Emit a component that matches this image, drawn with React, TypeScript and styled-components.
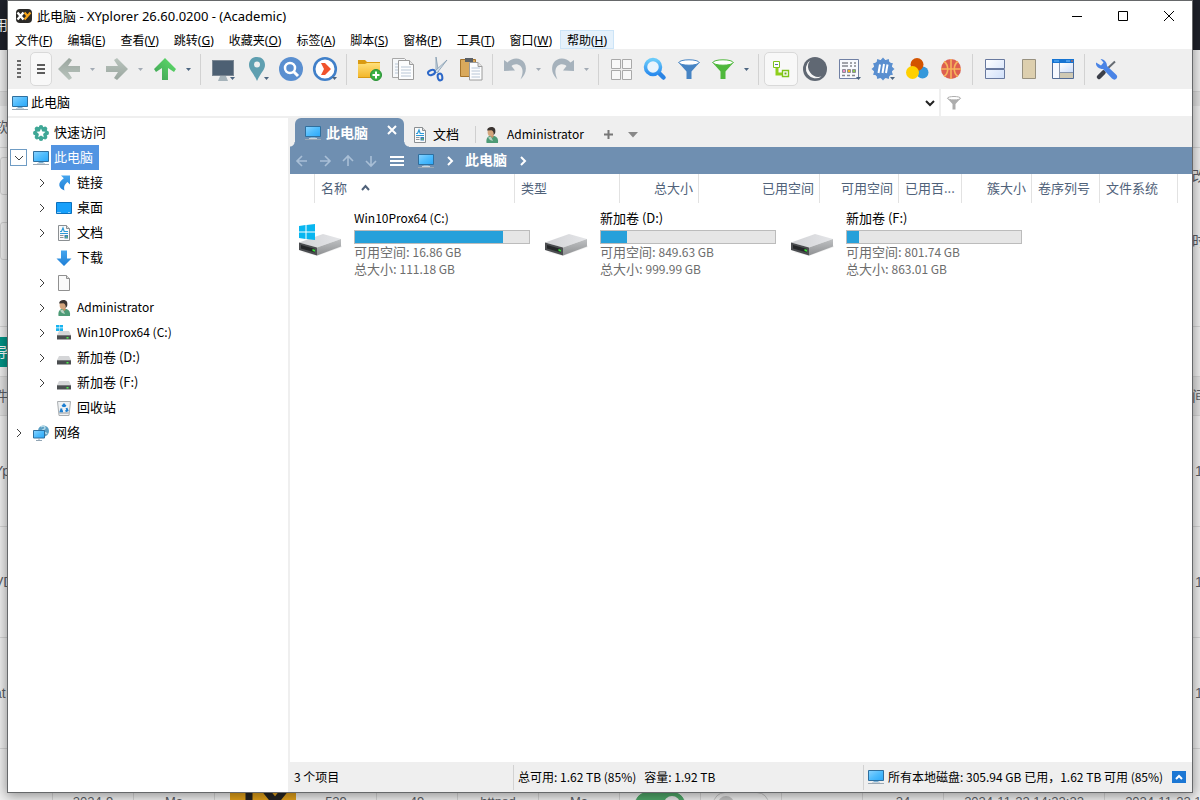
import React from "react";
import styled, { createGlobalStyle } from "styled-components";

const UI = `"Noto Sans CJK SC", "Noto Sans", sans-serif`;
const SEGOE = `"Noto Sans", "Noto Sans CJK SC", sans-serif`;

const GlobalStyle = createGlobalStyle`
  *, *::before, *::after { box-sizing: border-box; }
  body { margin: 0; font-family: ${UI}; font-size: 13px; color: #000; }
  button, input { font: inherit; color: inherit; margin: 0; padding: 0; border: 0; background: none; outline: 0; }
  ul { list-style: none; margin: 0; padding: 0; }
  svg { display: block; flex: none; overflow: visible; }
`;

/* ---------- page behind the window ---------- */

const Desktop = styled.div`
  position: relative;
  height: 100vh;
  min-height: 500px;
  overflow: hidden;
  background: #f1f1f1;
`;
const BackPage = styled.div`
  display: flex;
  flex-direction: column;
  font-family: "Liberation Sans", "Noto Sans CJK SC", sans-serif;
  font-size: 14px;
  color: #5c5f66;
`;
const BackRow = styled.div<{ $h: number; $bg?: string; $line?: boolean; $light?: boolean }>`
  display: flex;
  flex: none;
  justify-content: space-between;
  align-items: center;
  height: ${(p) => p.$h}px;
  line-height: 20px;
  background: ${(p) => p.$bg || "transparent"};
  border-bottom: ${(p) => (p.$line ? "1px solid #d6d6d6" : "0")};
  color: ${(p) => (p.$light ? "#fff" : "inherit")};
`;
const LeftText = styled.span<{ $bg?: string }>`
  width: 30px;
  padding: 5px 0;
  text-indent: -6px;
  white-space: nowrap;
  background: ${(p) => p.$bg || "transparent"};
`;
const RightText = styled.span<{ $digit?: boolean }>`
  width: 8px;
  padding-left: ${(p) => (p.$digit ? 3 : 0)}px;
  white-space: nowrap;
  overflow: hidden;
`;
const FieldRows = styled.div`
  display: flex;
  flex-direction: column;
  gap: 27px;
  align-self: flex-start;
  width: 100%;
  padding-top: 9px;
`;
const FieldRow = styled.div`
  display: flex;
  justify-content: space-between;
  align-items: center;
  height: 38px;
`;
const FieldBox = styled.span`
  width: 30px;
  height: 38px;
  border: 1px solid #d2d2d2;
  border-radius: 3px;
`;
const BackCells = styled.div`
  display: grid;
  grid-template-columns: 53px repeat(11, 81px) 161px 161px;
  height: 80px;
`;
const BackCell = styled.span<{ $plain?: boolean }>`
  display: flex;
  justify-content: center;
  padding-top: 45px;
  padding-left: ${(p) => (p.$plain ? 14 : 0)}px;
  line-height: 16px;
  font-size: 13px;
  border-right: ${(p) => (p.$plain ? "0" : "1px solid #d6d6d6")};
`;
const LogoBlock = styled.span`
  width: 66px;
  height: 36px;
  margin-top: -12px;
  background: #e2a11a;
`;
const Pill = styled.span<{ $on?: boolean }>`
  display: flex;
  align-items: center;
  justify-content: ${(p) => (p.$on ? "flex-end" : "flex-start")};
  width: ${(p) => (p.$on ? 50 : 56)}px;
  height: 24px;
  margin-top: -2px;
  padding: 0 4px;
  border-radius: 12px;
  background: ${(p) => (p.$on ? "#4fa869" : "transparent")};
  border: 1px solid ${(p) => (p.$on ? "#4fa869" : "#c4c4c4")};
  &::before {
    content: "";
    width: 16px;
    height: 16px;
    border-radius: 50%;
    background: ${(p) => (p.$on ? "#e6e6e6" : "#c4c4c4")};
  }
`;

/* ---------- window frame ---------- */

const Window = styled.main`
  position: absolute;
  inset: 0 7px 7px 7px;
  display: flex;
  flex-direction: column;
  background: #fff;
  border: 1px solid #66686a;
  box-shadow: 0 2px 12px 1px rgba(0, 0, 0, 0.4);
`;
const TitleBar = styled.header`
  display: flex;
  align-items: center;
  height: 29px;
  padding-left: 8px;
  font-family: ${SEGOE};
`;
const Title = styled.h1`
  flex: 1;
  margin: 0 0 0 5px;
  font-size: 13px;
  font-weight: 400;
  line-height: 20px;
`;
const CaptionButton = styled.button`
  display: flex;
  align-items: center;
  justify-content: center;
  width: 46px;
  height: 29px;
`;
const MenuBar = styled.nav`
  display: flex;
  gap: 1px;
  height: 19px;
  font-family: ${SEGOE};
`;
const MenuItem = styled.button<{ $hot?: boolean }>`
  height: 19px;
  padding: 2px 6px 0;
  font-size: 12px;
  line-height: 15px;
  white-space: nowrap;
  border: 1px solid ${(p) => (p.$hot ? "#cce4f7" : "transparent")};
  background: ${(p) => (p.$hot ? "#e5f1fb" : "transparent")};
`;
const ToolBar = styled.div`
  display: flex;
  align-items: center;
  height: 40px;
  background: #efefef;
`;
const Tool = styled.button<{ $pressed?: boolean; $narrow?: boolean }>`
  display: flex;
  align-items: center;
  justify-content: center;
  flex: none;
  width: ${(p) => (p.$narrow ? 22 : 34)}px;
  height: 34px;
  border: 1px solid ${(p) => (p.$pressed ? "#d9d9d9" : "transparent")};
  border-radius: 5px;
  background: ${(p) => (p.$pressed ? "#f8f8f8" : "transparent")};
`;
const Grip = styled.span`
  display: flex;
  justify-content: center;
  width: 22px;
`;
const Caret = styled.button`
  display: flex;
  align-items: center;
  flex: none;
  width: 14px;
  height: 34px;
  padding-left: 4px;
`;
const Divider = styled.span`
  flex: none;
  width: 10px;
  height: 31px;
  background: linear-gradient(#d2d2d2, #d2d2d2) 4px 0 / 1px 100% no-repeat;
`;
const AddressBar = styled.div`
  display: flex;
  align-items: center;
  height: 27px;
`;
const AddressField = styled.label`
  display: flex;
  flex: 1;
  align-items: center;
  gap: 3px;
  height: 27px;
  padding-left: 4px;
  border-right: 2px solid #efefef;
`;
const FilterField = styled.label`
  display: flex;
  align-items: center;
  gap: 6px;
  flex: 0 1 251px;
  padding-left: 6px;
`;
const TextInput = styled.input`
  flex: 1;
  min-width: 0;
  height: 22px;
  padding-bottom: 2px;
  font-size: 13px;
`;
const IconButton = styled.button`
  display: flex;
  align-items: center;
  justify-content: center;
  width: 18px;
  height: 22px;
`;

/* ---------- body ---------- */

const Body = styled.div`
  display: flex;
  flex: 1;
  min-height: 0;
  background: #efefef;
`;
const Tree = styled.ul`
  flex: none;
  width: 280px;
  margin-top: 2px;
  padding-top: 2px;
  background: #fff;
  overflow: hidden;
`;
const TreeRow = styled.li<{ $level: number }>`
  display: flex;
  align-items: center;
  height: 25px;
  padding-left: ${(p) => p.$level * 23}px;
`;
const Expander = styled.button<{ $open?: boolean }>`
  display: flex;
  align-items: center;
  justify-content: center;
  width: 17px;
  height: 17px;
  margin: 0 3px 0 2px;
  border: 1px solid ${(p) => (p.$open ? "#6f9cc4" : "transparent")};
`;
const ExpanderSpace = styled.span`
  width: 22px;
`;
const TreeIcon = styled.span`
  display: flex;
  justify-content: center;
  width: 21px;
`;
const TreeLabel = styled.span<{ $selected?: boolean; $latin?: boolean }>`
  height: 25px;
  padding: 0 6px 0 3px;
  font-size: ${(p) => (p.$latin ? 12 : 13)}px;
  line-height: ${(p) => (p.$latin ? 24 : 23)}px;
  color: ${(p) => (p.$selected ? "#fff" : "#000")};
  background: ${(p) => (p.$selected ? "#5294e2" : "transparent")};
`;
const Pane = styled.section`
  display: flex;
  flex: 1;
  flex-direction: column;
  min-width: 0;
  margin-left: 2px;
`;
const Tabs = styled.div`
  display: flex;
  align-items: flex-end;
  height: 31px;
  padding-left: 5px;
`;
const ActiveTab = styled.div`
  position: relative;
  display: flex;
  align-items: center;
  gap: 5px;
  width: 109px;
  height: 29px;
  padding-left: 10px;
  color: #fff;
  font-size: 14px;
  font-weight: 700;
  background: #6f8fb1;
  border-radius: 6px 6px 0 0;
  &::before, &::after {
    content: "";
    position: absolute;
    bottom: 0;
    width: 5px;
    height: 5px;
  }
  &::before { left: -5px; background: radial-gradient(circle at 0 0, transparent 4px, #6f8fb1 5px); }
  &::after { right: -5px; background: radial-gradient(circle at 100% 0, transparent 4px, #6f8fb1 5px); }
`;
const TabButton = styled.button`
  padding-bottom: 2px;
  line-height: 20px;
`;
const CloseButton = styled.button`
  display: flex;
  align-self: flex-start;
  margin: 8px 0 0 15px;
`;
const Tab = styled.button<{ $line?: boolean }>`
  display: flex;
  align-items: center;
  gap: ${(p) => (p.$line ? 5 : 7)}px;
  height: 17px;
  margin-bottom: 4px;
  padding: 0 ${(p) => (p.$line ? 16 : 12)}px 0 8px;
  font-size: ${(p) => (p.$line ? 13 : 12)}px;
  line-height: 17px;
  border-right: 1px solid ${(p) => (p.$line ? "#cfcfcf" : "transparent")};
`;
const TabText = styled.span`
  padding-bottom: 2px;
`;
const TabTool = styled.button`
  display: flex;
  align-items: center;
  justify-content: center;
  width: 24px;
  height: 25px;
`;
const NavBar = styled.nav`
  display: flex;
  align-items: center;
  height: 27px;
  color: #fff;
  background: #6f8fb1;
`;
const NavButton = styled.button<{ $w?: number }>`
  display: flex;
  align-items: center;
  justify-content: center;
  width: ${(p) => p.$w || 23}px;
  height: 27px;
`;
const Crumb = styled.a`
  padding: 0 4px 0 5px;
  font-size: 14px;
  font-weight: 700;
  line-height: 25px;
  height: 27px;
  color: #fff;
  text-decoration: none;
`;
const Columns = styled.div`
  display: flex;
  height: 29px;
  background: #fff;
`;
const Column = styled.button<{ $w: number; $right?: boolean }>`
  display: flex;
  align-items: center;
  justify-content: ${(p) => (p.$right ? "flex-end" : "flex-start")};
  gap: 14px;
  flex: none;
  width: ${(p) => p.$w}px;
  padding: 0 5px 2px 6px;
  line-height: 20px;
  white-space: nowrap;
  color: #50627a;
  border-right: 1px solid #e2e2e2;
`;
const Drives = styled.ul`
  display: flex;
  flex: 1;
  flex-wrap: wrap;
  align-content: flex-start;
  padding-top: 5px;
  background: #fff;
`;
const Drive = styled.li`
  display: flex;
  width: 246px;
  gap: 12px;
  padding-left: 8px;
`;
const DriveIcon = styled.span`
  width: 44px;
  padding-top: 14px;
`;
const DriveText = styled.div`
  width: 176px;
  line-height: 17px;
  color: #6d6d6d;
`;
const DriveName = styled.div<{ $latin?: boolean }>`
  height: 20px;
  font-size: ${(p) => (p.$latin ? 12 : 13)}px;
  line-height: 19px;
  color: #000;
`;
const Gauge = styled.div`
  height: 14px;
  margin-top: 2px;
  border: 1px solid #bcbcbc;
  background: #e6e6e6;
`;
const GaugeFill = styled.div`
  height: 12px;
  background: #26a0da;
`;
const DriveFact = styled.div`
  height: 17px;
  line-height: 16px;
`;
const Amount = styled.span`
  font-size: 12px;
`;
const StatusBar = styled.footer`
  display: flex;
  align-items: center;
  height: 30px;
  line-height: 24px;
  font-size: 12px;
  white-space: pre;
`;
const StatusCell = styled.div<{ $w?: number }>`
  display: flex;
  align-items: center;
  flex: ${(p) => (p.$w ? `0 0 ${p.$w}px` : "1")};
  gap: 4px;
  height: 25px;
  padding-left: 4px;
  &:not(:last-child) { border-right: 1px solid #d2d2d2; }
`;
const StatusToggle = styled.button`
  display: flex;
  align-items: center;
  justify-content: center;
  width: 14px;
  height: 12px;
  margin-left: auto;
  margin-right: 6px;
  background: #1c77d4;
`;

/* ---------- icons ---------- */

const Big = ({ children }: { children: React.ReactNode }) => (
  <svg width="28" height="28" viewBox="-14 -14 28 28" aria-hidden="true">{children}</svg>
);
const Small = ({ children }: { children: React.ReactNode }) => (
  <svg width="16" height="16" viewBox="0 0 16 16" aria-hidden="true">{children}</svg>
);
const CornerCaret = () => <path d="M7 8h5l-2.500 3z" fill="#4c6580" />;

const HiddenDefs = styled.svg`
  position: absolute;
`;
const Gradients = () => (
  <HiddenDefs width="0" height="0" aria-hidden="true">
    <defs>
      <linearGradient id="screen" x1="0" y1="0" x2="1" y2="1"><stop offset="0" stopColor="#8bd3ff" /><stop offset=".5" stopColor="#4fbcfd" /><stop offset="1" stopColor="#2aa7f8" /></linearGradient>
      <linearGradient id="grey" x1="0" y1="0" x2="0" y2="1"><stop offset="0" stopColor="#9aa69f" /><stop offset="1" stopColor="#b9c4bd" /></linearGradient>
      <linearGradient id="green" x1="0" y1="0" x2="1" y2="1"><stop offset="0" stopColor="#5fe06a" /><stop offset="1" stopColor="#3f9e55" /></linearGradient>
      <linearGradient id="folder" x1="0" y1="0" x2="0" y2="1"><stop offset="0" stopColor="#ffe07a" /><stop offset="1" stopColor="#f3b72c" /></linearGradient>
      <linearGradient id="lens" x1="0" y1="0" x2="0" y2="1"><stop offset="0" stopColor="#6acbfa" /><stop offset="1" stopColor="#2b8cee" /></linearGradient>
      <linearGradient id="pane" x1="0" y1="0" x2="1" y2="1"><stop offset="0" stopColor="#fff" /><stop offset="1" stopColor="#cfdffa" /></linearGradient>
      <linearGradient id="arrow" x1="0" y1="0" x2="0" y2="1"><stop offset="0" stopColor="#45a5ee" /><stop offset="1" stopColor="#1f7fd6" /></linearGradient>
      <linearGradient id="diskTop" x1="0" y1="0" x2="1" y2="0"><stop offset="0" stopColor="#d2d3d6" /><stop offset="1" stopColor="#e4e5e8" /></linearGradient>
      <linearGradient id="diskSide" x1="0" y1="0" x2="0" y2="1"><stop offset="0" stopColor="#bfc1c3" /><stop offset="1" stopColor="#8f9193" /></linearGradient>
    </defs>
  </HiddenDefs>
);

const Computer = () => (
  <Small>
    <path d="M.5 1.500h15v10H.5z" fill="url(#screen)" stroke="#2f6f9e" />
    <path d="M5.500 12.500h5" stroke="#7fb2d4" />
    <path d="M4 13.500h8" stroke="#c9d3dc" />
    <path d="M0 14.500h16" stroke="#9aa8b4" />
  </Small>
);
const Document = () => (
  <Small>
    <path d="M2.500.5h8l3 3v12h-11z" fill="#fafafa" stroke="#8b8f92" />
    <path d="M10.500.5v3h3" fill="#ddd" stroke="#8b8f92" />
    <path d="M4 6.500h1.500L7 3l1.200 3.500H12M4 8.500h8" fill="none" stroke="#2c9ad8" strokeWidth="1.200" />
    <path d="M4 10.500h3.500M4 12.500h3.500" stroke="#8d9399" />
    <path d="M8.500 10h3.500v3.500H8.500z" fill="#3b7fb5" />
    <path d="M9 12.500l1.500-1.500 1.500 2z" fill="#6bbf6b" />
  </Small>
);
const BlankFile = () => (
  <Small>
    <path d="M2.500.5h8l3 3v12h-11z" fill="#fafafa" stroke="#909090" />
    <path d="M10.500.5v3h3" fill="#ddd" stroke="#909090" />
  </Small>
);
const User = () => (
  <Small>
    <path d="M2.500 16C2 12 3 9.500 6 9l4.500 0c3 1 4 3.500 3.500 7z" fill="#4d9b76" />
    <path d="M4 10.500L7 9.500l2 4.500-3-1z" fill="#b9d3c4" />
    <path d="M6 7.500h3.500v2.500L8 11z" fill="#c98f63" />
    <ellipse cx="6.800" cy="5" rx="3.200" ry="4.200" fill="#d3a57c" />
    <path d="M3.200 3.500C3 1.300 5 0 7.500 0 10.500 0 12 2 11.200 6L9.500 8.500C10 6 9.500 4 7.500 3.200z" fill="#3a3431" />
  </Small>
);
const SmallDisk = ({ win }: { win?: boolean }) => (
  <Small>
    <path d="M3 6h10l2 4H1z" fill="#d5d6d8" />
    <path d="M1 10h14v4.500H1z" fill="#4a4d50" />
    <path d="M1 10h14v1H1z" fill="#77797b" />
    <path d="M10.500 12h2v1.500h-2z" fill="#4cf04c" />
    {win && <path d="M0 0h3v2.500H0zM3.500 0H7v2.500H3.500zM0 3.200h3V6H0zM3.500 3.200H7V6H3.500z" fill="#18b4f0" />}
  </Small>
);
const Favorite = () => (
  <Small>
    <g fill="#3fa796">
      <circle cx="8" cy="8" r="6.500" />
      {[0, 45, 90, 135, 180, 225, 270, 315].map((a) => (
        <circle key={a} cx="8" cy="2.200" r="2.200" transform={`rotate(${a} 8 8)`} />
      ))}
    </g>
    <path d="M8 3.500l1.300 3 3.200.3-2.400 2.200.7 3.200L8 10.500l-2.800 1.700.7-3.200L3.500 6.800l3.200-.3z" fill="#fff" />
  </Small>
);
const Link = () => (
  <Small>
    <path d="M5 .5h9v9l-2.600-2.600C8.500 9.500 7.500 11.500 8.500 15.500 3 13.500.5 8.500 7.800 3.300z" fill="url(#arrow)" />
  </Small>
);
const DesktopIcon = () => (
  <Small>
    <path d="M.5 2.500h15v11H.5z" fill="#18a0fb" stroke="#0b70bd" />
    <path d="M1.500 12.500h13" stroke="#fff" strokeDasharray="1 1 1 8 1 1" />
  </Small>
);
const Download = () => (
  <Small>
    <path d="M5 .5h6v8h4.500L8 16 .5 8.500H5z" fill="url(#arrow)" />
  </Small>
);
const Recycle = () => (
  <Small>
    <path d="M1.500 1.500h13L13 15.500H3z" fill="#eef1f3" stroke="#a9adb0" />
    <path d="M3 13h10" stroke="#c2c6c9" strokeWidth="2" />
    <path d="M6.300 6.500L8 4.500l1.700 2M10.500 8l1 2.500-2 .8M7 11.300H4.700L5.600 8.500" fill="none" stroke="#1d7fd1" strokeWidth="2" />
  </Small>
);
const Network = () => (
  <Small>
    <circle cx="10.500" cy="6" r="5.500" fill="#5b9fc4" />
    <path d="M8 2c2-1.500 4-1 4 1s-3 1-3 3 4 1 5 3" fill="none" stroke="#b6dbe9" strokeWidth="1.500" />
    <path d="M.5 5.500h11v7.500H.5z" fill="url(#screen)" stroke="#2f6f9e" />
    <path d="M3 15.500h6M6 13v2" stroke="#93a6b5" />
  </Small>
);
const Drive3D = ({ win }: { win?: boolean }) => (
  <svg width="44" height="36" viewBox="0 0 44 36" aria-hidden="true">
    <path d="M3 30l16 4 25-9-2-4z" fill="#000" opacity=".07" />
    <path d="M1 20.500L25 12l18 5-24 8.500z" fill="url(#diskTop)" />
    <path d="M19 25.500L43 17v7.500L19 33.500z" fill="url(#diskSide)" />
    <path d="M1 20.500l18 5v8L1 28z" fill="#4b4d50" />
    <path d="M3 23l14 4v3.500L3 26.500z" fill="#242628" />
    <path d="M14.500 27l2.500.700v2L14.500 29z" fill="#38e038" />
    {win && <path d="M1 4l6.500-1v6.500H1zM8.500 3L17 2v7.500H8.500zM1 10.500h6.500V17L1 16zM8.500 10.500H17V18l-8.500-1z" fill="#08b6f0" />}
  </svg>
);
const Chevron = ({ color = "#404040", d = "M1 1l4 4-4 4", w = 6, h = 10, sw = 1 }: { color?: string; d?: string; w?: number; h?: number; sw?: number }) => (
  <svg width={w} height={h} viewBox={`0 0 ${w} ${h}`} aria-hidden="true">
    <path d={d} fill="none" stroke={color} strokeWidth={sw} />
  </svg>
);
const NavArrow = ({ turn }: { turn: number }) => (
  <svg width="12" height="12" viewBox="-6 -6 12 12" aria-hidden="true">
    <path d="M5 0H-4M0-5L-5 0 0 5" fill="none" stroke="#a9bfd6" strokeWidth="1.600" transform={`rotate(${turn})`} />
  </svg>
);
const DropCaret = ({ on }: { on?: boolean }) => (
  <svg width="5" height="3" viewBox="0 0 5 3" aria-hidden="true">
    <path d="M0 0h5L2.500 3z" fill={on ? "#4c6580" : "#a3abb5"} />
  </svg>
);
const Arrow = ({ turn, fill }: { turn: number; fill: string }) => (
  <Big>
    <path d="M-11 0L0-11 3-9-1-3H11V3H-1L3 9 0 11z" fill={fill} transform={`rotate(${turn})`} />
  </Big>
);
const UndoIcon = ({ flip }: { flip?: boolean }) => (
  <Big>
    <path
      d="M-11-9L-7.500-6.500C-3-12 6-12 9.500-6 12.500-.5 10.500 6 5.500 10.500 8 5 8.500 0 5.500-3 2.500-5.700-1.500-5-3.500-3L0 1.500-11 2z"
      fill="#a6b2bc"
      transform={flip ? "scale(-1 1)" : undefined}
    />
  </Big>
);
const FunnelIcon = ({ fill }: { fill: string }) => (
  <Big>
    <path d="M-11-7L-2.500 2.500V10h5V2.500L11-7z" fill={fill} />
    <ellipse cx="0" cy="-6.500" rx="10" ry="2.700" fill="#fff" stroke={fill} />
  </Big>
);

const Logo = () => (
  <svg width="16" height="16" viewBox="0 0 16 16" aria-hidden="true">
    <rect y="1" width="16" height="14" rx="4" fill="#2b2a28" />
    <path d="M1.500 4.500l6 7M7.500 4.500l-6 7" stroke="#fff" strokeWidth="2.400" />
    <path d="M8.500 4.500L11.500 8l3-3.500M11.500 8l-3 3.500" fill="none" stroke="#f4a51c" strokeWidth="2.200" />
  </svg>
);

type ToolDef = { kind: "tool"; name: string; icon: React.ReactNode; pressed?: boolean } | { kind: "caret"; name: string; on?: boolean } | { kind: "div" };

const tool = (name: string, icon: React.ReactNode, pressed?: boolean): ToolDef => ({ kind: "tool", name, icon, pressed });
const caret = (name: string, on?: boolean): ToolDef => ({ kind: "caret", name, on });
const div: ToolDef = { kind: "div" };

const tools: ToolDef[] = [
  tool("后退", <Arrow turn={0} fill="url(#grey)" />),
  caret("后退历史"),
  tool("前进", <Arrow turn={180} fill="url(#grey)" />),
  caret("前进历史"),
  tool("向上", <Arrow turn={90} fill="url(#green)" />),
  caret("上级列表", true),
  div,
  tool("此电脑", (
    <Big>
      <path d="M-11-9h22V7h-22z" fill="#7b8793" />
      <path d="M-10-8h20V6h-20z" fill="#4d6073" />
      <path d="M-3 7h6l2 5H-5z" fill="#a6b3ba" />
      <CornerCaret />
    </Big>
  )),
  tool("位置", (
    <Big>
      <path fillRule="evenodd" d="M0-12c5 0 8 3.500 8 8C8 1 4 3 0 12-4 3-8 1-8-4c0-4.500 3-8 8-8zm0 4.500a3 3 0 100 6 3 3 0 000-6z" fill="#5f9fb0" />
      <CornerCaret />
    </Big>
  )),
  tool("查找", (
    <Big>
      <circle r="12" fill="#5a8fd0" />
      <circle cx="-1" cy="-1" r="5" fill="none" stroke="#fff" strokeWidth="2.500" />
      <path d="M2.500 2.500L7 7" stroke="#fff" strokeWidth="3" />
    </Big>
  )),
  tool("转到", (
    <Big>
      <circle r="10.800" fill="#fff" stroke="#4180c9" strokeWidth="2.600" />
      <path d="M-4-6H0L6 0 0 6h-4l3-6z" fill="#f0532d" />
      <CornerCaret />
    </Big>
  )),
  div,
  tool("新建文件夹", (
    <Big>
      <path d="M-11-9h7l2 2h13V9h-22z" fill="#d99a12" />
      <path d="M-11-5h7l2-1h13V8h-22z" fill="url(#folder)" />
      <circle cx="7" cy="6" r="5.500" fill="#38b044" stroke="#2a9136" />
      <path d="M7 2.500v7M3.500 6h7" stroke="#fff" strokeWidth="2" />
    </Big>
  )),
  tool("复制", (
    <Big>
      <path d="M-10.500-10.500H1.500l3 3V8.500h-15z" fill="#f6f8fa" stroke="#a8a8a8" />
      <path d="M-8-5h6M-8-2h6M-8 1h6M-8 4h6" stroke="#b8c6d6" />
      <path d="M-4.500-8.500H6.500l4 4v15h-15z" fill="#fcfdfe" stroke="#9c9c9c" />
      <path d="M6.500-8.500v4h4" fill="#e4e4e4" stroke="#9c9c9c" />
      <path d="M-2-2H8M-2 1H8M-2 4H8M-2 7H8" stroke="#b8c6d6" />
    </Big>
  )),
  tool("剪切", (
    <Big>
      <path d="M-1-12L1.500 3-1 2z" fill="#d5e0ea" stroke="#8299ad" strokeWidth=".8" />
      <path d="M10-9L0 4-2 2z" fill="#d5e0ea" stroke="#8299ad" strokeWidth=".8" />
      <ellipse cx="-5.500" cy="3.500" rx="3.600" ry="2.400" fill="none" stroke="#2d68c8" strokeWidth="2" transform="rotate(-20 -5.500 3.500)" />
      <ellipse cx="3" cy="8" rx="2.300" ry="3.400" fill="none" stroke="#2d68c8" strokeWidth="2" transform="rotate(-12 3 8)" />
    </Big>
  )),
  tool("粘贴", (
    <Big>
      <path d="M-10.500-9.500H4.500v17h-15z" fill="#d9a95c" stroke="#a5742c" />
      <path d="M-6-11h8v4h-8z" fill="#5a6066" />
      <path d="M-1.500-6.500H7l4 4v13.500H-1.500z" fill="#fcfdfe" stroke="#9c9c9c" />
      <path d="M7-6.500v4h4" fill="#e4e4e4" stroke="#9c9c9c" />
      <path d="M.5-1H9M.5 2H9M.5 5H9M.5 8H9" stroke="#b8c6d6" />
    </Big>
  )),
  div,
  tool("撤销", <UndoIcon />),
  caret("撤销历史"),
  tool("重做", <UndoIcon flip />),
  caret("重做历史"),
  div,
  tool("视图", (
    <Big>
      <path d="M-9.500-9.500h9v9h-9zM1.500-9.500h9v9h-9zM-9.500 1.500h9v9h-9zM1.500 1.500h9v9h-9z" fill="#f8f8f8" stroke="#a9a9a9" />
    </Big>
  )),
  tool("搜索", (
    <Big>
      <path d="M4.500 4.500L8.500 8.500" stroke="#2b84e4" strokeWidth="4.500" strokeLinecap="round" />
      <circle cx="-2" cy="-2" r="7.500" fill="#e9f4fc" stroke="url(#lens)" strokeWidth="3.500" />
    </Big>
  )),
  tool("筛选", <FunnelIcon fill="#4684c4" />),
  tool("快速筛选", <FunnelIcon fill="#4fb83c" />),
  caret("筛选列表", true),
  div,
  tool("文件树", (
    <Big>
      <path d="M-4-1v6H1" fill="none" stroke="#8fce1c" strokeWidth="3" />
      <path d="M-7.500-7.500h6v6h-6z" fill="#fff" stroke="#7ec31b" />
      <path d="M-6-4.500h3" stroke="#5a6fa0" />
      <path d="M1.500 1.500h6v6h-6z" fill="#fff" stroke="#7ec31b" strokeWidth="1.400" />
      <path d="M3.500 3.500h2v2h-2z" fill="#6aaa1b" />
    </Big>
  ), true),
  tool("夜间模式", (
    <Big>
      <circle r="12" fill="#606873" />
      <path d="M-5-8.500A9.800 9.800 0 1 0 6.500 7.500A10.500 10.500 0 0 1-5-8.500z" fill="#f6f6f6" />
    </Big>
  )),
  tool("列表", (
    <Big>
      <path d="M-9.500-9.500h19v19h-19z" fill="#f7f9fd" stroke="#7080a4" />
      <path d="M-7-6h6M1-6h2M5-6h2M-7-3h6M1-3h2M5-3h2M-7 6.500h3M-2 6.500h3M3 6.500h3" stroke="#84868e" strokeWidth="1.500" />
      <path d="M-6.500.5h3v3h-3z" fill="#ee8fc4" stroke="#8d8d96" /><path d="M-1.500.5h3v3h-3z" fill="#f4b51b" stroke="#8d8d96" /><path d="M3.500.5h3v3h-3z" fill="#8bcb4a" stroke="#8d8d96" />
      <CornerCaret />
    </Big>
  )),
  tool("标签", (
    <Big>
      <g fill="#5a8fd0">
        <circle r="9.500" />
        {Array.from({ length: 12 }, (_, i) => <path key={i} d="M-3-8L0-11.500 3-8z" transform={`rotate(${i * 30})`} />)}
      </g>
      <path d="M-4.500 4L-3-4.500M-.5 4L1-5M3 4l1.500-8.500" stroke="#fff" strokeWidth="2" />
      <CornerCaret />
    </Big>
  )),
  tool("颜色", (
    <Big>
      <circle cx="5.500" cy="3.500" r="6" fill="#3498db" />
      <circle cx="0" cy="-4.500" r="6.500" fill="#d35400" />
      <circle cx="-4.500" cy="3.500" r="6.500" fill="#ffd000" />
    </Big>
  )),
  tool("球", (
    <Big>
      <circle r="10" fill="#dd5f50" />
      <path d="M0-10V10M-10 0H10M-7-7.500C-2-4-2 4-7 7.500M7-7.500C2-4 2 4 7 7.500" fill="none" stroke="#f7b45c" strokeWidth="1.600" />
    </Big>
  )),
  div,
  tool("双窗格", (
    <Big>
      <path d="M-9.500-9.500h19v9h-19zM-9.500.5h19v9h-19z" fill="url(#pane)" stroke="#68799f" />
    </Big>
  )),
  tool("预览", (
    <Big><path d="M-6.500-9.500h13v19h-13z" fill="#ddcfae" stroke="#98917f" /></Big>
  )),
  tool("布局", (
    <Big>
      <path d="M-10.500-9.500h21v19h-21z" fill="#f6f9ff" stroke="#526c96" />
      <path d="M-11-10h22v4h-22z" fill="#1674d2" />
      <path d="M-9-8h5" stroke="#6dbcff" /><path d="M3-8h4" stroke="#7cc1ff" /><path d="M8-8h2" stroke="#f0642d" />
      <path d="M-3-6h13v9H-3z" fill="url(#pane)" /><path d="M-3 4h13v5H-3z" fill="#cfc9b4" />
      <path d="M-3.500-6V9M-3 3.500h13" stroke="#8694ab" />
    </Big>
  )),
  div,
  tool("工具", (
    <Big>
      <path d="M8-7.500L-1 1" stroke="#666b72" strokeWidth="2" />
      <path d="M-3.500 3.500l-4.500 4.500" stroke="#3c3f49" strokeWidth="4.500" strokeLinecap="round" />
      <path d="M-11-6.500C-11.500-2.500-8 0-4 0L5 9.500c1.500 1.500 3.500 1.500 4.500 0 1-1 1-3-.5-4L0-3C0-6.500-2-9.500-6.500-10l3 3.500-2.500 3z" fill="#4a84e6" />
    </Big>
  )),
];

const menus = [["文件", "F"], ["编辑", "E"], ["查看", "V"], ["跳转", "G"], ["收藏夹", "O"], ["标签", "A"], ["脚本", "S"], ["窗格", "P"], ["工具", "T"], ["窗口", "W"], ["帮助", "H"]];

const tree: { label: string; level: number; icon: React.ReactNode; exp?: boolean; selected?: boolean; latin?: boolean }[] = [
  { label: "快速访问", level: 0, icon: <Favorite /> },
  { label: "此电脑", level: 0, icon: <Computer />, exp: true, selected: true },
  { label: "链接", level: 1, icon: <Link />, exp: true },
  { label: "桌面", level: 1, icon: <DesktopIcon />, exp: true },
  { label: "文档", level: 1, icon: <Document />, exp: true },
  { label: "下载", level: 1, icon: <Download /> },
  { label: "", level: 1, icon: <BlankFile />, exp: true },
  { label: "Administrator", level: 1, icon: <User />, exp: true, latin: true },
  { label: "Win10Prox64 (C:)", level: 1, icon: <SmallDisk win />, exp: true, latin: true },
  { label: "新加卷 (D:)", level: 1, icon: <SmallDisk />, exp: true },
  { label: "新加卷 (F:)", level: 1, icon: <SmallDisk />, exp: true },
  { label: "回收站", level: 1, icon: <Recycle /> },
  { label: "网络", level: 0, icon: <Network />, exp: true },
];

const columns: [string, number, boolean][] = [
  ["", 25, false], ["名称", 200, false], ["类型", 105, false], ["总大小", 79, true], ["已用空间", 121, true],
  ["可用空间", 79, true], ["已用百...", 63, false], ["簇大小", 70, true], ["卷序列号", 68, false], ["文件系统", 78, false],
];

const drives = [
  { name: "Win10Prox64 (C:)", used: 85, free: "16.86 GB", total: "111.18 GB", win: true },
  { name: "新加卷 (D:)", used: 15, free: "849.63 GB", total: "999.99 GB" },
  { name: "新加卷 (F:)", used: 7, free: "801.74 GB", total: "863.01 GB" },
];

const Background = () => (
  <BackPage aria-hidden="true">
    <BackRow $h={50} $bg="#1f222b" $light><LeftText>用</LeftText></BackRow>
    <BackRow $h={42} $line />
    <BackRow $h={14} $bg="#e2e2e2" />
    <BackRow $h={42} $line><LeftText>软件</LeftText></BackRow>
    <BackRow $h={179} $line>
      <FieldRows>
        <FieldRow><FieldBox /><RightText>改</RightText></FieldRow>
        <FieldRow><FieldBox /><RightText>时</RightText></FieldRow>
      </FieldRows>
    </BackRow>
    <BackRow $h={50} $light $line><LeftText $bg="#009688">导</LeftText></BackRow>
    <BackRow $h={39} $bg="#e4e4e4" $line><LeftText>件</LeftText><RightText>间</RightText></BackRow>
    <BackRow $h={111} $line><LeftText>Yplorer</LeftText><RightText $digit>1</RightText></BackRow>
    <BackRow $h={111} $line><LeftText>VD</LeftText><RightText $digit>1</RightText></BackRow>
    <BackRow $h={111} $line><LeftText>at</LeftText><RightText $digit>1</RightText></BackRow>
    <BackCells>
      <BackCell /><BackCell>2024-9</BackCell><BackCell>Ma</BackCell>
      <BackCell $plain><LogoBlock>
        <svg width="66" height="36" viewBox="0 0 66 36"><path d="M19 0v36M29 0l16 20M61 0L45 20v16" fill="none" stroke="#262523" strokeWidth="7" /></svg>
      </LogoBlock></BackCell>
      <BackCell>529</BackCell><BackCell>49</BackCell><BackCell>httpsd</BackCell><BackCell>Ma</BackCell>
      <BackCell><Pill $on /></BackCell><BackCell><Pill /></BackCell><BackCell /><BackCell>24</BackCell>
      <BackCell>2024-11-22 14:22:22</BackCell><BackCell>2024-11-22 14:22:22</BackCell>
    </BackCells>
  </BackPage>
);

export default function App() {
  return (
    <Desktop>
      <GlobalStyle />
      <Gradients />
      <Background />
      <Window>
        <TitleBar>
          <Logo />
          <Title>此电脑 - XYplorer 26.60.0200 - (Academic)</Title>
          <CaptionButton aria-label="最小化"><Chevron color="#000" w={10} h={10} d="M0 5.500h10" /></CaptionButton>
          <CaptionButton aria-label="最大化"><Chevron color="#000" w={10} h={10} d="M.5.5h9v9h-9z" /></CaptionButton>
          <CaptionButton aria-label="关闭"><Chevron color="#000" w={10} h={10} d="M0 0l10 10M10 0L0 10" /></CaptionButton>
        </TitleBar>
        <MenuBar>
          {menus.map(([label, key]) => (
            <MenuItem key={key} $hot={key === "H"}>{label}(<u>{key}</u>)</MenuItem>
          ))}
        </MenuBar>
        <ToolBar role="toolbar">
          <Grip>
            <svg width="4" height="18" viewBox="0 0 4 18"><path d="M2 0v18" stroke="#6a6a6a" strokeWidth="4" strokeDasharray="2 2" /></svg>
          </Grip>
          <Tool $pressed $narrow aria-label="菜单">
            <svg width="8" height="10" viewBox="0 0 8 10"><path d="M0 1h8M0 5h8M0 9h8" stroke="#5c5c5c" strokeWidth="2" /></svg>
          </Tool>
          {tools.map((t, i) =>
            t.kind === "div" ? <Divider key={i} /> :
            t.kind === "caret" ? <Caret key={i} aria-label={t.name}><DropCaret on={t.on} /></Caret> :
            <Tool key={i} aria-label={t.name} $pressed={t.pressed}>{t.icon}</Tool>
          )}
        </ToolBar>
        <AddressBar>
          <AddressField>
            <Computer />
            <TextInput aria-label="地址" defaultValue="此电脑" />
            <IconButton aria-label="展开地址"><Chevron color="#222" w={10} h={6} d="M1 1l4 4 4-4" sw={2} /></IconButton>
          </AddressField>
          <FilterField>
            <svg width="14" height="14" viewBox="0 0 14 14"><path d="M0 2l5.500 6v5.500h3V8L14 2z" fill="#adadad" /><ellipse cx="7" cy="2.200" rx="6.500" ry="1.700" fill="#fff" stroke="#adadad" /></svg>
            <TextInput aria-label="筛选" />
          </FilterField>
        </AddressBar>
        <Body>
          <Tree>
            {tree.map((n, i) => (
              <TreeRow key={i} $level={n.level}>
                {n.exp ? (
                  <Expander $open={n.selected} aria-label="展开">
                    {n.selected ? <Chevron w={10} h={6} d="M1 1l4 4 4-4" /> : <Chevron />}
                  </Expander>
                ) : <ExpanderSpace />}
                <TreeIcon>{n.icon}</TreeIcon>
                <TreeLabel $selected={n.selected} $latin={n.latin}>{n.label}</TreeLabel>
              </TreeRow>
            ))}
          </Tree>
          <Pane>
            <Tabs>
              <ActiveTab>
                <Computer />
                <TabButton>此电脑</TabButton>
                <CloseButton aria-label="关闭标签"><Chevron color="#fff" w={8} h={8} d="M0 0l8 8M8 0L0 8" sw={2} /></CloseButton>
              </ActiveTab>
              <Tab $line><Document /><TabText>文档</TabText></Tab>
              <Tab><User /><TabText>Administrator</TabText></Tab>
              <TabTool aria-label="新建标签"><Chevron color="#777" w={9} h={9} d="M0 4.500h9M4.500 0v9" sw={2} /></TabTool>
              <TabTool aria-label="标签列表"><svg width="10" height="6" viewBox="0 0 10 6"><path d="M0 0h10L5 5.500z" fill="#888" /></svg></TabTool>
            </Tabs>
            <NavBar>
              <NavButton aria-label="后退"><NavArrow turn={0} /></NavButton>
              <NavButton aria-label="前进"><NavArrow turn={180} /></NavButton>
              <NavButton aria-label="向上"><NavArrow turn={90} /></NavButton>
              <NavButton aria-label="向下"><NavArrow turn={270} /></NavButton>
              <NavButton $w={30} aria-label="菜单"><Chevron color="#fff" w={14} h={10} d="M0 1h14M0 5h14M0 9h14" sw={2} /></NavButton>
              <NavButton $w={28} aria-label="此电脑"><Computer /></NavButton>
              <NavButton $w={20} aria-label="展开"><Chevron color="#fff" sw={2} /></NavButton>
              <Crumb href="#">此电脑</Crumb>
              <NavButton aria-label="展开"><Chevron color="#fff" sw={2} /></NavButton>
            </NavBar>
            <Columns>
              {columns.map(([label, w, right], i) => (
                <Column key={i} $w={w} $right={right} aria-label={label || "图标"}>
                  {label}
                  {i === 1 && <Chevron color="#50627a" w={9} h={6} d="M1 5l3.500-4L8 5" sw={2} />}
                </Column>
              ))}
            </Columns>
            <Drives>
              {drives.map((d) => (
                <Drive key={d.name}>
                  <DriveIcon><Drive3D win={d.win} /></DriveIcon>
                  <DriveText>
                    <DriveName $latin={d.win}>{d.name}</DriveName>
                    <Gauge><GaugeFill style={{ width: `${d.used}%` }} /></Gauge>
                    <DriveFact>可用空间: <Amount>{d.free}</Amount></DriveFact>
                    <DriveFact>总大小: <Amount>{d.total}</Amount></DriveFact>
                  </DriveText>
                </Drive>
              ))}
            </Drives>
            <StatusBar>
              <StatusCell $w={224}>3 个项目</StatusCell>
              <StatusCell>总可用: 1.62 TB (85%)   容量: 1.92 TB</StatusCell>
              <StatusCell $w={328}>
                <Computer />
                <span>所有本地磁盘: 305.94 GB 已用，1.62 TB 可用 (85%)</span>
                <StatusToggle aria-label="展开"><Chevron color="#fff" w={8} h={5} d="M1 4l3-3 3 3" sw={2} /></StatusToggle>
              </StatusCell>
            </StatusBar>
          </Pane>
        </Body>
      </Window>
    </Desktop>
  );
}
